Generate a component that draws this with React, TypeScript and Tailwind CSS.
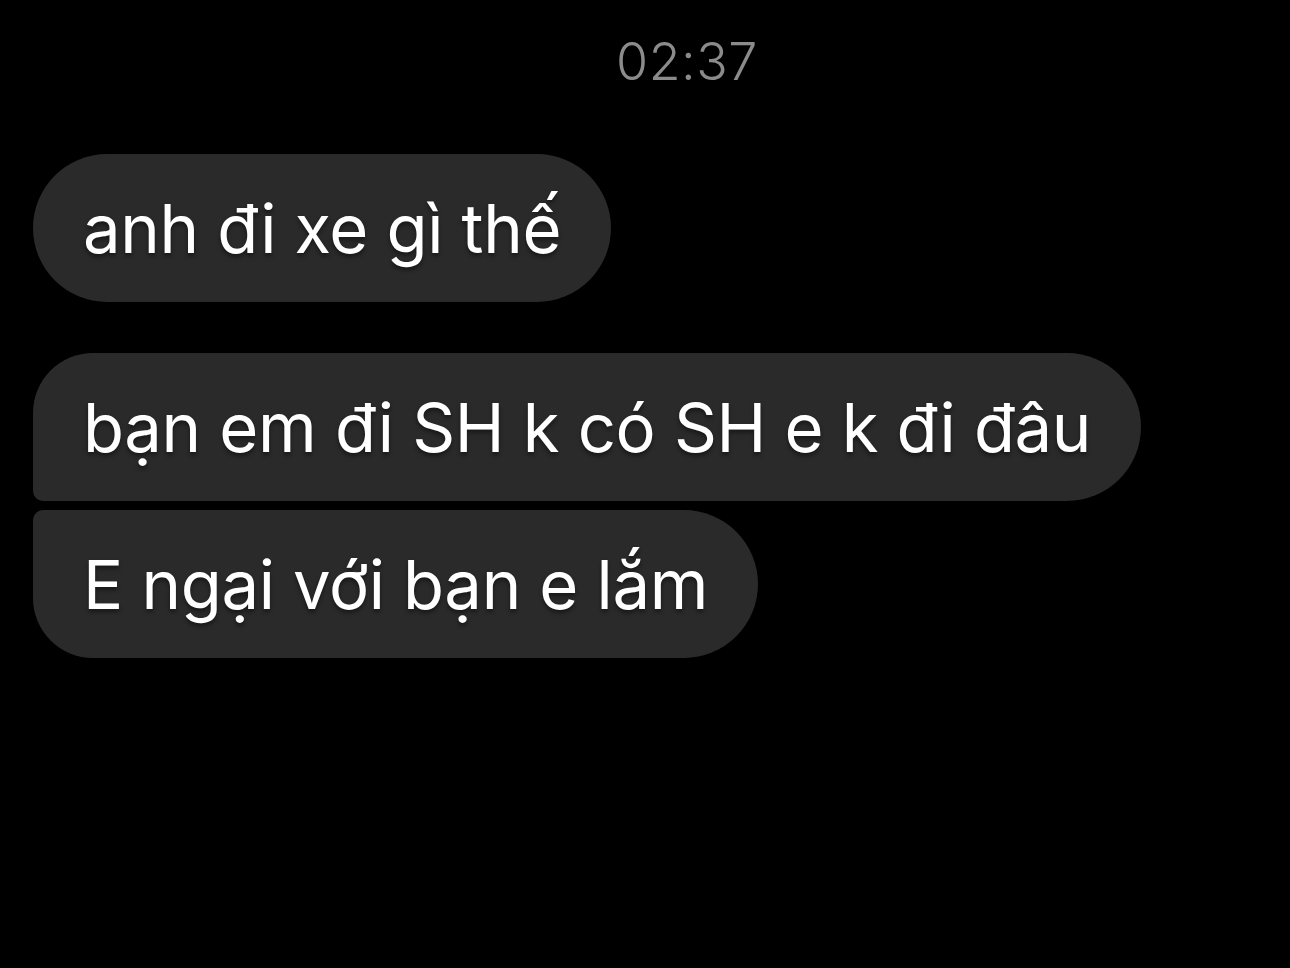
const font = { fontFamily: 'Inter, "Noto Sans", sans-serif' };

function Bubble({ text, shape }: { text: string; shape: string }) {
  return (
    <div
      className={`h-[148px] flex items-center pl-[50px] pr-[50px] bg-[#2a2a2a] text-white text-[67px] leading-none tracking-[-0.35px] whitespace-nowrap ${shape}`}
    >
      <span className="[text-shadow:0_3px_4px_rgba(0,0,0,0.45)]">{text}</span>
    </div>
  );
}

export default function App() {
  return (
    <div className="w-[1290px] h-[968px] bg-black overflow-hidden" style={font}>
      <div className="flex justify-center pl-[84px] pt-[32px] h-[154px]">
        <span className="text-[#8b8b8b] text-[52px] font-light leading-[60px] tracking-[0.5px]">02:37</span>
      </div>
      <div className="flex flex-col items-start pl-[33px]">
        <Bubble text="anh đi xe gì thế" shape="rounded-[74px]" />
        <div className="h-[51px]" />
        <div className="flex flex-col items-start gap-[9px]">
          <Bubble text="bạn em đi SH k có SH e k đi đâu" shape="rounded-tr-[74px] rounded-br-[74px] rounded-tl-[60px] rounded-bl-[10px]" />
          <Bubble text="E ngại với bạn e lắm" shape="rounded-tr-[74px] rounded-br-[74px] rounded-bl-[60px] rounded-tl-[10px]" />
        </div>
      </div>
    </div>
  );
}
